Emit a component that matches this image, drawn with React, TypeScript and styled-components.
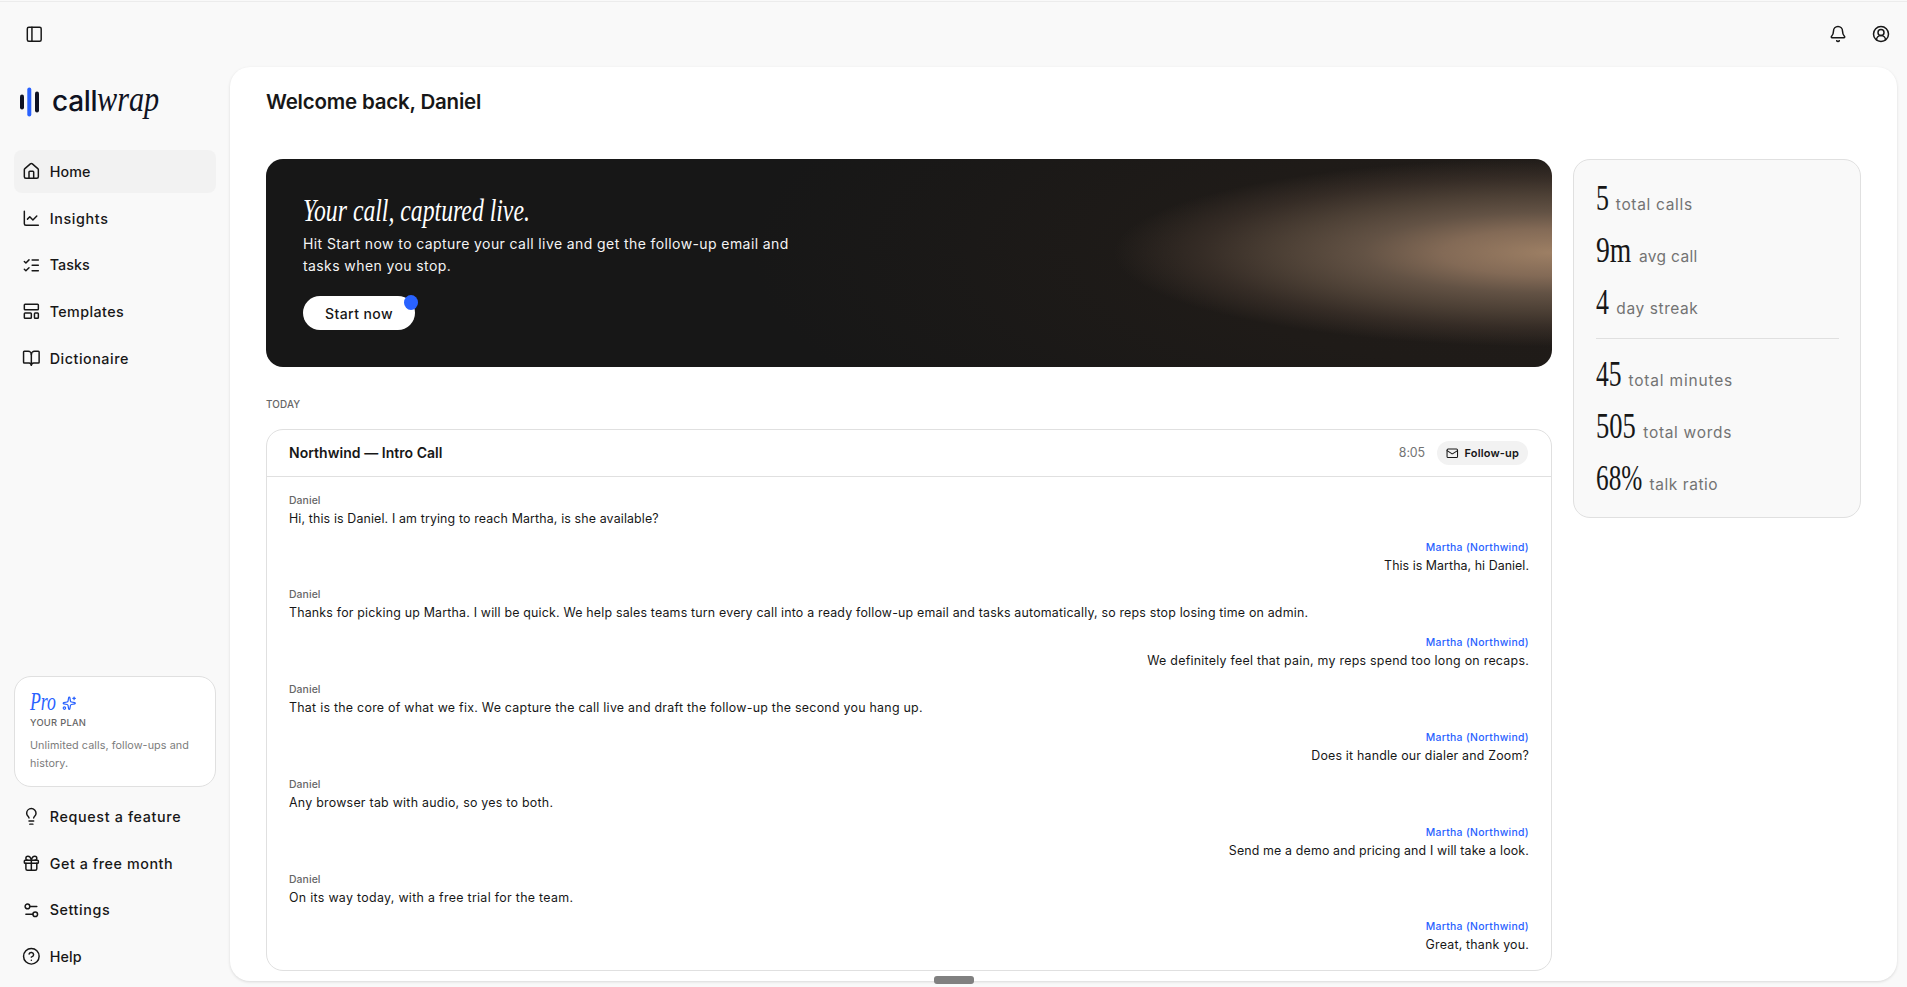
import React from "react";
import styled, { createGlobalStyle } from "styled-components";
import {
  Bell,
  BookOpen,
  ChartLine,
  CircleHelp,
  CircleUserRound,
  Gift,
  House,
  LayoutTemplate,
  Lightbulb,
  ListChecks,
  Mail,
  PanelLeft,
  Settings2,
  Sparkles,
} from "lucide-react";
import type { LucideIcon } from "lucide-react";

const sans = `Inter, "Liberation Sans", sans-serif`;
const serif = `"Liberation Serif", "Times New Roman", serif`;
const blue = "#2962ff";
const line = "#e0e0e0";

const GlobalStyle = createGlobalStyle`
  *, *::before, *::after { box-sizing: border-box; }
  body {
    margin: 0;
    background: #f9f9f9;
    color: #171717;
    font-family: ${sans};
    overflow: hidden;
  }
`;

const Page = styled.div`
  display: flex;
  flex-direction: column;
  height: 100vh;
  padding-top: 1px;
`;

const TopBar = styled.header`
  display: flex;
  align-items: center;
  justify-content: space-between;
  height: 66px;
  padding: 0 17px 1px 25px;
  border-top: 1px solid #ececec;
  flex: none;
  svg {
    display: block;
  }
`;

const TopActions = styled.div`
  display: flex;
  gap: 25px;
`;

const Body = styled.div`
  display: flex;
  flex: 1;
  min-height: 0;
`;

const Sidebar = styled.aside`
  display: flex;
  flex-direction: column;
  width: 230px;
  padding: 0 14px 9px;
  flex: none;
`;

const Logo = styled.div`
  display: flex;
  align-items: center;
  height: 70px;
  margin-bottom: 13px;
  padding-left: 6px;
  color: #0f1222;
`;

const LogoWord = styled.div`
  display: flex;
  align-items: baseline;
  margin-left: 13px;
  padding-bottom: 4px;
  line-height: 40px;
  font-size: 28px;
  font-weight: 500;
  letter-spacing: -0.3px;
`;

/* Serif text squeezed horizontally into a display width. */
const Condensed = styled.span<{ $size: number; $scale: number; $width: number; $italic?: boolean }>`
  display: inline-block;
  width: ${(p) => p.$width}px;
  font-family: ${serif};
  font-size: ${(p) => p.$size}px;
  font-style: ${(p) => (p.$italic ? "italic" : "normal")};
  font-weight: 400;
  letter-spacing: 0;
  white-space: nowrap;
  transform: scaleX(${(p) => p.$scale});
  transform-origin: 0 50%;
`;

const Nav = styled.nav`
  display: flex;
  flex-direction: column;
  gap: 4px;
`;

const NavItem = styled.a<{ $active?: boolean; $tracking: number }>`
  display: flex;
  align-items: center;
  gap: 9px;
  height: 42.75px;
  padding-left: 8px;
  border-radius: 8px;
  background: ${(p) => (p.$active ? "#f2f2f2" : "transparent")};
  font-size: 14.3px;
  font-weight: 500;
  letter-spacing: ${(p) => p.$tracking}px;
`;

const PlanCard = styled.section`
  height: 111px;
  margin-top: auto;
  margin-bottom: 8px;
  padding: 11px 14px 0 15px;
  border: 1px solid ${line};
  border-radius: 17px;
  background: #fff;
`;

const PlanName = styled.div`
  display: flex;
  align-items: center;
  gap: 6px;
  height: 27px;
  color: ${blue};
  svg {
    margin-top: 3px;
  }
`;

const PlanLabel = styled.div`
  margin-bottom: 6px;
  line-height: 16px;
  font-size: 9.4px;
  font-weight: 500;
  letter-spacing: 0.25px;
  color: #666;
`;

const PlanText = styled.div`
  line-height: 18.2px;
  font-size: 10.8px;
  letter-spacing: 0.07px;
  color: #7c7c7c;
`;

const Panel = styled.main`
  flex: 1;
  min-width: 0;
  margin: 0 10px 6px 0;
  padding: 15px 36px 0;
  border-radius: 20px;
  background: #fff;
  box-shadow: 0 1px 3px rgba(0, 0, 0, 0.13);
`;

const Title = styled.h1`
  margin: 0 0 38px;
  line-height: 39px;
  font-size: 20.5px;
  font-weight: 600;
  letter-spacing: -0.2px;
`;

const Columns = styled.div`
  display: flex;
  align-items: flex-start;
  gap: 21px;
`;

const MainColumn = styled.div`
  flex: 1;
  min-width: 0;
`;

const Hero = styled.section`
  height: 208px;
  padding: 35px 37px;
  border-radius: 17px;
  color: #fff;
  background:
    radial-gradient(
      ellipse 438px 94px at 100% 45%,
      #9d7f64 0%,
      #836a56 25%,
      rgba(101, 84, 70, 0.97) 43%,
      rgba(84, 70, 58, 0.85) 62%,
      rgba(65, 53, 45, 0.65) 80%,
      rgba(32, 28, 25, 0) 100%
    ),
    radial-gradient(ellipse 800px 260px at 100% 45%, #211c19 0%, #1f1b18 45%, #171717 100%);
`;

const HeroTitle = styled.h2`
  margin: 0;
  line-height: 34px;
  height: 34px;
`;

const HeroText = styled.p`
  margin: 5px 0 19px;
  line-height: 22px;
  font-size: 14px;
  letter-spacing: 0.405px;
  white-space: pre-line;
  color: #f4f4f4;
`;

const StartButton = styled.button`
  position: relative;
  display: block;
  width: 112px;
  height: 34px;
  padding: 0;
  border: 0;
  border-radius: 17px;
  background: #fff;
  color: #171717;
  font: 500 14px ${sans};
  letter-spacing: 0.43px;
`;

const Dot = styled.i`
  position: absolute;
  top: -1px;
  right: -3px;
  width: 14px;
  height: 15px;
  border-radius: 50%;
  background: ${blue};
`;

const DayLabel = styled.div`
  margin: 27px 0 15px;
  line-height: 20px;
  font-size: 9.9px;
  font-weight: 500;
  letter-spacing: 0.15px;
  color: #666;
`;

const CallCard = styled.article`
  height: 542px;
  border: 1px solid ${line};
  border-radius: 17px;
`;

const CallHeader = styled.header`
  display: flex;
  align-items: center;
  height: 47px;
  padding: 0 23px 0 22px;
  border-bottom: 1px solid ${line};
`;

const CallTitle = styled.h3`
  margin: 0 auto 0 0;
  padding-bottom: 2px;
  font-size: 14px;
  font-weight: 600;
  letter-spacing: 0.04px;
`;

const CallTime = styled.span`
  margin-right: 12px;
  padding-bottom: 2px;
  font-size: 12.4px;
  letter-spacing: -0.1px;
  color: #737373;
`;

const FollowUp = styled.span`
  display: flex;
  align-items: center;
  gap: 6px;
  width: 91px;
  height: 24px;
  padding-left: 9px;
  border-radius: 12px;
  background: #f2f2f2;
  font-size: 11px;
  font-weight: 600;
  letter-spacing: 0.15px;
  white-space: nowrap;
`;

const Transcript = styled.div`
  display: flex;
  flex-direction: column;
  gap: 10.44px;
  padding: 14.5px 22px;
`;

const Message = styled.div<{ $theirs: boolean }>`
  text-align: ${(p) => (p.$theirs ? "right" : "left")};
`;

const Speaker = styled.div<{ $theirs: boolean }>`
  line-height: 17px;
  font-size: 10.4px;
  font-weight: 500;
  letter-spacing: ${(p) => (p.$theirs ? 0.3 : 0.1)}px;
  color: ${(p) => (p.$theirs ? blue : "#666")};
`;

const Speech = styled.div<{ $tracking: number }>`
  line-height: 20px;
  font-size: 12.4px;
  letter-spacing: ${(p) => p.$tracking}px;
`;

const StatsCard = styled.aside`
  width: 288px;
  height: 359px;
  padding: 13px 21px 0 22px;
  border: 1px solid ${line};
  border-radius: 17px;
  background: #f9f9f9;
`;

const Stat = styled.div`
  display: flex;
  align-items: baseline;
  gap: 7px;
  height: 52.2px;
  line-height: 52px;
`;

const StatLabel = styled.span<{ $tracking: number }>`
  font-size: 15.5px;
  letter-spacing: ${(p) => p.$tracking}px;
  color: #737373;
`;

const Divider = styled.hr`
  height: 1px;
  margin: 8px 0 10px;
  border: 0;
  background: ${line};
`;

const Handle = styled.div`
  position: fixed;
  left: 934px;
  top: 976px;
  width: 40px;
  height: 8px;
  border-radius: 3px;
  background: #808080;
`;

type NavEntry = { label: string; icon: LucideIcon; tracking: number; active?: boolean };

const primaryNav: NavEntry[] = [
  { label: "Home", icon: House, tracking: 0.1, active: true },
  { label: "Insights", icon: ChartLine, tracking: 0.65 },
  { label: "Tasks", icon: ListChecks, tracking: 0.05 },
  { label: "Templates", icon: LayoutTemplate, tracking: 0.41 },
  { label: "Dictionaire", icon: BookOpen, tracking: 0.54 },
];

const secondaryNav: NavEntry[] = [
  { label: "Request a feature", icon: Lightbulb, tracking: 0.66 },
  { label: "Get a free month", icon: Gift, tracking: 0.57 },
  { label: "Settings", icon: Settings2, tracking: 0.6 },
  { label: "Help", icon: CircleHelp, tracking: 0.17 },
];

const messages: { theirs?: boolean; text: string; tracking: number }[] = [
  { text: "Hi, this is Daniel. I am trying to reach Martha, is she available?", tracking: 0.136 },
  { theirs: true, text: "This is Martha, hi Daniel.", tracking: 0.05 },
  {
    text: "Thanks for picking up Martha. I will be quick. We help sales teams turn every call into a ready follow-up email and tasks automatically, so reps stop losing time on admin.",
    tracking: 0.191,
  },
  { theirs: true, text: "We definitely feel that pain, my reps spend too long on recaps.", tracking: 0.253 },
  {
    text: "That is the core of what we fix. We capture the call live and draft the follow-up the second you hang up.",
    tracking: 0.263,
  },
  { theirs: true, text: "Does it handle our dialer and Zoom?", tracking: 0.189 },
  { text: "Any browser tab with audio, so yes to both.", tracking: 0.257 },
  { theirs: true, text: "Send me a demo and pricing and I will take a look.", tracking: 0.139 },
  { text: "On its way today, with a free trial for the team.", tracking: 0.31 },
  { theirs: true, text: "Great, thank you.", tracking: 0.193 },
];

type StatEntry = { value: string; label: string; width: number; scale: number; tracking: number };

const recentStats: StatEntry[] = [
  { value: "5", label: "total calls", width: 12.8, scale: 0.74, tracking: 0.67 },
  { value: "9m", label: "avg call", width: 36, scale: 0.79, tracking: 0.33 },
  { value: "4", label: "day streak", width: 13.3, scale: 0.74, tracking: 0.59 },
];

const totalStats: StatEntry[] = [
  { value: "45", label: "total minutes", width: 25.5, scale: 0.73, tracking: 0.81 },
  { value: "505", label: "total words", width: 40.3, scale: 0.757, tracking: 0.69 },
  { value: "68%", label: "talk ratio", width: 46.6, scale: 0.722, tracking: 0.54 },
];

function NavList({ items }: { items: NavEntry[] }) {
  return (
    <Nav>
      {items.map(({ label, icon: Icon, tracking, active }) => (
        <NavItem key={label} $active={active} $tracking={tracking}>
          <Icon size={18.7} strokeWidth={1.9} />
          {label}
        </NavItem>
      ))}
    </Nav>
  );
}

function StatRows({ items }: { items: StatEntry[] }) {
  return (
    <>
      {items.map((s) => (
        <Stat key={s.label}>
          <Condensed $size={35} $scale={s.scale} $width={s.width}>
            {s.value}
          </Condensed>
          <StatLabel $tracking={s.tracking}>{s.label}</StatLabel>
        </Stat>
      ))}
    </>
  );
}

export default function App() {
  return (
    <Page>
      <GlobalStyle />
      <TopBar>
        <PanelLeft size={18.5} strokeWidth={1.9} />
        <TopActions>
          <Bell size={18} strokeWidth={2} />
          <CircleUserRound size={18} strokeWidth={2} />
        </TopActions>
      </TopBar>
      <Body>
        <Sidebar>
          <Logo>
            <svg width="19" height="30" viewBox="0 0 19 30">
              <rect x="0" y="7.5" width="4" height="15" rx="2" fill="#0f1222" />
              <rect x="7.3" y="0.5" width="4" height="29" rx="2" fill={blue} />
              <rect x="15" y="4.5" width="4" height="21" rx="2" fill="#0f1222" />
            </svg>
            <LogoWord>
              call
              <Condensed $size={36} $scale={0.84} $width={62} $italic>
                wrap
              </Condensed>
            </LogoWord>
          </Logo>
          <NavList items={primaryNav} />
          <PlanCard>
            <PlanName>
              <Condensed $size={25} $scale={0.71} $width={26} $italic>
                Pro
              </Condensed>
              <Sparkles size={14.5} strokeWidth={2} />
            </PlanName>
            <PlanLabel>YOUR PLAN</PlanLabel>
            <PlanText>Unlimited calls, follow-ups and history.</PlanText>
          </PlanCard>
          <NavList items={secondaryNav} />
        </Sidebar>
        <Panel>
          <Title>Welcome back, Daniel</Title>
          <Columns>
            <MainColumn>
              <Hero>
                <HeroTitle>
                  <Condensed $size={31.5} $scale={0.753} $width={228} $italic>
                    Your call, captured live.
                  </Condensed>
                </HeroTitle>
                <HeroText>
                  {"Hit Start now to capture your call live and get the follow-up email and\ntasks when you stop."}
                </HeroText>
                <StartButton>
                  Start now
                  <Dot />
                </StartButton>
              </Hero>
              <DayLabel>TODAY</DayLabel>
              <CallCard>
                <CallHeader>
                  <CallTitle>Northwind — Intro Call</CallTitle>
                  <CallTime>8:05</CallTime>
                  <FollowUp>
                    <Mail size={12.6} strokeWidth={2} />
                    Follow-up
                  </FollowUp>
                </CallHeader>
                <Transcript>
                  {messages.map((m) => (
                    <Message key={m.text} $theirs={!!m.theirs}>
                      <Speaker $theirs={!!m.theirs}>{m.theirs ? "Martha (Northwind)" : "Daniel"}</Speaker>
                      <Speech $tracking={m.tracking}>{m.text}</Speech>
                    </Message>
                  ))}
                </Transcript>
              </CallCard>
            </MainColumn>
            <StatsCard>
              <StatRows items={recentStats} />
              <Divider />
              <StatRows items={totalStats} />
            </StatsCard>
          </Columns>
        </Panel>
      </Body>
      <Handle />
    </Page>
  );
}
